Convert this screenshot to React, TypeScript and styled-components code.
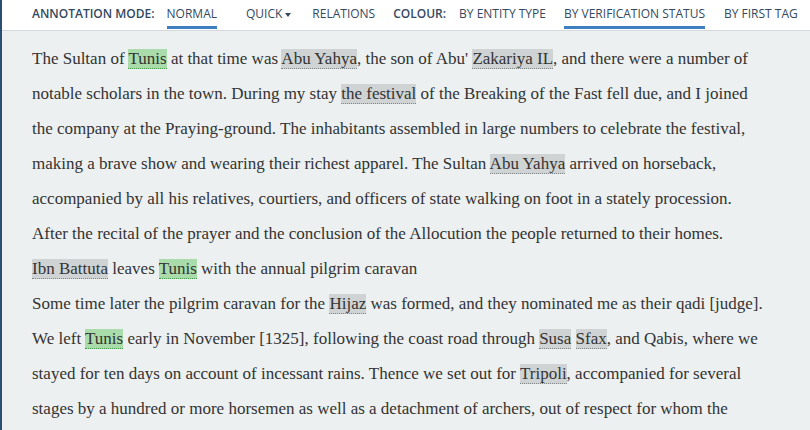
import React from "react";
import styled, { createGlobalStyle } from "styled-components";

const Global = createGlobalStyle`
  html, body { margin: 0; padding: 0; }
  body { background: #ecf0f1; overflow: hidden; }
`;

const Frame = styled.div`
  width: 810px;
  height: 430px;
  box-sizing: border-box;
  border-left: 2px solid #2c4d71;
  display: flex;
  flex-direction: column;
  background: #ecf0f1;
  overflow: hidden;
`;

const Toolbar = styled.div`
  height: 30px;
  flex: none;
  background: #ffffff;
  border-bottom: 1px solid #d6d9db;
  display: flex;
  align-items: flex-start;
  padding-left: 30px;
  font-family: "Open Sans", "Liberation Sans", sans-serif;
  font-size: 12px;
  line-height: 16px;
  color: #34495e;
  text-transform: uppercase;
`;

const Label = styled.span<{ $gap: number }>`
  font-weight: 600;
  padding-top: 6px;
  margin-right: ${(p) => p.$gap}px;
  white-space: nowrap;
`;

const Item = styled.span<{ $active?: boolean; $gap: number }>`
  box-sizing: border-box;
  height: 29px;
  padding-top: 6px;
  margin-right: ${(p) => p.$gap}px;
  border-bottom: 3px solid ${(p) => (p.$active ? "#3d7fc1" : "transparent")};
  white-space: nowrap;
  display: flex;
  align-items: flex-start;
  gap: 3px;
`;

const Caret = styled.span`
  width: 0;
  height: 0;
  margin-top: 7px;
  border-left: 3.5px solid transparent;
  border-right: 3.5px solid transparent;
  border-top: 4px solid #34495e;
`;

const Content = styled.div`
  flex: 1;
  padding: 10px 0 0 30px;
  font-family: "Liberation Serif", "Times New Roman", serif;
  font-size: 17px;
  line-height: 35px;
  color: #333333;
`;

const Line = styled.div`
  white-space: nowrap;
`;

const Entity = styled.span<{ $kind: "place" | "other" }>`
  background: ${(p) => (p.$kind === "place" ? "#a9dcaa" : "#cfd3d4")};
  border-bottom: 1px dotted ${(p) => (p.$kind === "place" ? "#3f9e46" : "#808588")};
`;

const P = ({ children }: { children: React.ReactNode }) => <Entity $kind="place">{children}</Entity>;
const O = ({ children }: { children: React.ReactNode }) => <Entity $kind="other">{children}</Entity>;

export default function App() {
  return (
    <>
      <Global />
      <Frame>
        <Toolbar>
          <Label $gap={12}>Annotation mode:</Label>
          <Item $active $gap={29}>Normal</Item>
          <Item $gap={21}>
            Quick
            <Caret />
          </Item>
          <Item $gap={18}>Relations</Item>
          <Label $gap={13}>Colour:</Label>
          <Item $gap={18}>By entity type</Item>
          <Item $active $gap={19}>By verification status</Item>
          <Item $gap={0}>By first tag</Item>
        </Toolbar>
        <Content>
          <Line>
            The Sultan of <P>Tunis</P> at that time was <O>Abu Yahya</O>, the son of Abu' <O>Zakariya IL</O>, and there were a number of
          </Line>
          <Line>
            notable scholars in the town. During my stay <O>the festival</O> of the Breaking of the Fast fell due, and I joined
          </Line>
          <Line>
            the company at the Praying-ground. The inhabitants assembled in large numbers to celebrate the festival,
          </Line>
          <Line>
            making a brave show and wearing their richest apparel. The Sultan <O>Abu Yahya</O> arrived on horseback,
          </Line>
          <Line>
            accompanied by all his relatives, courtiers, and officers of state walking on foot in a stately procession.
          </Line>
          <Line>
            After the recital of the prayer and the conclusion of the Allocution the people returned to their homes.
          </Line>
          <Line>
            <O>Ibn Battuta</O> leaves <P>Tunis</P> with the annual pilgrim caravan
          </Line>
          <Line>
            Some time later the pilgrim caravan for the <O>Hijaz</O> was formed, and they nominated me as their qadi [judge].
          </Line>
          <Line>
            We left <P>Tunis</P> early in November [1325], following the coast road through <O>Susa</O> <O>Sfax</O>, and Qabis, where we
          </Line>
          <Line>
            stayed for ten days on account of incessant rains. Thence we set out for <O>Tripoli</O>, accompanied for several
          </Line>
          <Line>
            stages by a hundred or more horsemen as well as a detachment of archers, out of respect for whom the
          </Line>
        </Content>
      </Frame>
    </>
  );
}
